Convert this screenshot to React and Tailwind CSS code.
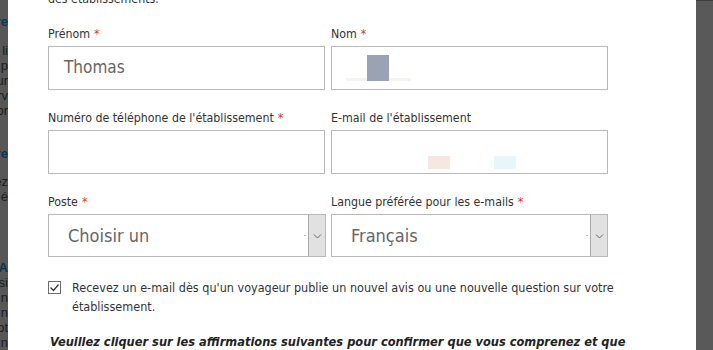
import React from "react";

const label = "text-[12.3px] leading-[16px] text-[#333]";
const ui = { fontFamily: "'DejaVu Sans Condensed', 'DejaVu Sans', sans-serif" };

function Star() {
  return <span className="text-[#d9372b] ml-[4px]">*</span>;
}

function Field({ title, required, children }) {
  return (
    <div className="flex flex-col">
      <div className={label}>
        {title}
        {required && <Star />}
      </div>
      <div className="mt-[4px]">{children}</div>
    </div>
  );
}

function Box({ children, className = "" }) {
  return (
    <div className={`h-[44px] border border-[#b8b8b8] bg-white flex items-center ${className}`}>
      {children}
    </div>
  );
}

function Select({ value }) {
  return (
    <div className="h-[43px] border border-[#b8b8b8] bg-white flex items-stretch">
      <div className="flex-1 flex items-center pl-[19px] text-[18px] text-[#666]">{value}</div>
      <div className="w-[3px] flex items-center justify-end">
        <span className="block w-[2px] h-[1px] bg-[#bbb]" />
      </div>
      <div className="w-[17px] ml-[2px] bg-[#e1e1e1] border-l border-[#a9a9a9] flex items-center justify-center">
        <svg width="9" height="6" viewBox="0 0 9 6" fill="none" stroke="#666" strokeWidth="1">
          <path d="M1 1.5l3.5 3.5L8 1.5" />
        </svg>
      </div>
    </div>
  );
}

// page behind the modal overlay, only a sliver shows on the left
function Backdrop({ lines }) {
  return (
    <div className="w-[8px] bg-[#575757] overflow-hidden flex flex-col text-[13px]" style={{ fontFamily: "'Liberation Sans', sans-serif" }}>
      {lines.map((l, i) => (
        <div
          key={i}
          className={`h-[15px] leading-[15px] whitespace-nowrap flex justify-end ${l.bold ? "font-bold text-[#0b3550]" : "text-[#1c1c1c]"}`}
        >
          {l.t}
        </div>
      ))}
    </div>
  );
}

const side = [
  { t: "" }, { t: "ure", bold: true }, { t: "" }, { t: "li" }, { t: "p" }, { t: "ur" }, { t: "rv" }, { t: "or" },
  { t: "" }, { t: "" }, { t: "re", bold: true }, { t: "" }, { t: "ez" }, { t: "s é" }, { t: "" }, { t: "" },
  { t: "" }, { t: "" }, { t: "oA", bold: true }, { t: "si" }, { t: "n" }, { t: "n" }, { t: "ot" }, { t: "n" },
];

export default function App() {
  return (
    <div className="w-[713px] h-[350px] overflow-hidden flex bg-[#575757]" style={ui}>
      <Backdrop lines={side} />

      <div className="w-[688px] bg-white pl-[40px] flex flex-col">
        <p className={`${label} -mt-[9px]`}>des établissements.</p>

        <div className="mt-[19px] grid grid-cols-[277px_277px] gap-x-[6px] gap-y-[20px]">
          <Field title="Prénom" required>
            <Box>
              <span className="pl-[15px] text-[17px] text-[#666]">Thomas</span>
            </Box>
          </Field>
          <Field title="Nom" required>
            <Box className="relative">
              <div className="absolute left-[14px] top-[31px] w-[65px] h-[3px] bg-[#f3f4f0]" />
              <div className="absolute left-[35px] top-[8px] w-[22px] h-[26px] bg-[#9aa3b3]" />
            </Box>
          </Field>

          <Field title="Numéro de téléphone de l'établissement" required>
            <Box />
          </Field>
          <Field title="E-mail de l'établissement">
            <Box className="relative">
              <div className="absolute left-[96px] top-[25px] w-[22px] h-[13px] bg-[#f5e8e0]" />
              <div className="absolute left-[162px] top-[25px] w-[22px] h-[13px] bg-[#e8f6fb]" />
            </Box>
          </Field>

          <Field title="Poste" required>
            <div className="w-[278px]">
              <Select value="Choisir un" />
            </div>
          </Field>
          <Field title="Langue préférée pour les e-mails" required>
            <Select value="Français" />
          </Field>
        </div>

        <div className="mt-[21px] flex items-start">
          <div className="mt-[3px] w-[13px] h-[13px] border border-[#6d6d6d] bg-white flex items-center justify-center shrink-0">
            <svg width="11" height="9" viewBox="0 0 11 9" fill="none" stroke="#333" strokeWidth="1.2">
              <path d="M1.5 4.5l3 3L9.5 1.5" />
            </svg>
          </div>
          <p className="ml-[11px] w-[570px] text-[12.5px] leading-[19px] text-[#333]">
            Recevez un e-mail dès qu'un voyageur publie un nouvel avis ou une nouvelle question sur votre établissement.
          </p>
        </div>

        <p className="mt-[16px] ml-[2px] text-[12.7px] leading-[19px] font-bold italic text-[#222] whitespace-nowrap">
          Veuillez cliquer sur les affirmations suivantes pour confirmer que vous comprenez et que
        </p>
      </div>

      <div className="w-[17px] bg-[#595959] border-t border-[#3f3f3f]" />
    </div>
  );
}
